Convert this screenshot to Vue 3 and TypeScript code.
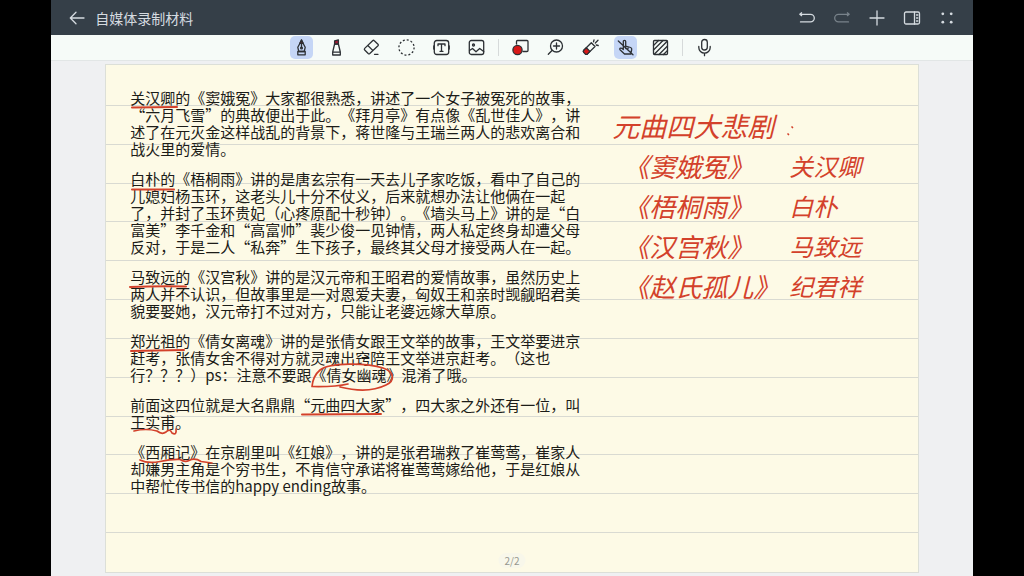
<script setup lang="ts">
interface Play {
  title: string
  author: string
}

const paragraphs: string[][] = [
  [
    '关汉卿的《窦娥冤》大家都很熟悉，讲述了一个女子被冤死的故事，',
    '“六月飞雪”的典故便出于此。《拜月亭》有点像《乱世佳人》，讲',
    '述了在元灭金这样战乱的背景下，蒋世隆与王瑞兰两人的悲欢离合和',
    '战火里的爱情。',
  ],
  [
    '白朴的《梧桐雨》讲的是唐玄宗有一天去儿子家吃饭，看中了自己的',
    '儿媳妇杨玉环，这老头儿十分不仗义，后来就想办法让他俩在一起',
    '了，并封了玉环贵妃（心疼原配十秒钟）。《墙头马上》讲的是“白',
    '富美”李千金和“高富帅”裴少俊一见钟情，两人私定终身却遭父母',
    '反对，于是二人“私奔”生下孩子，最终其父母才接受两人在一起。',
  ],
  [
    '马致远的《汉宫秋》讲的是汉元帝和王昭君的爱情故事，虽然历史上',
    '两人并不认识，但故事里是一对恩爱夫妻，匈奴王和亲时觊觎昭君美',
    '貌要娶她，汉元帝打不过对方，只能让老婆远嫁大草原。',
  ],
  [
    '郑光祖的《倩女离魂》讲的是张倩女跟王文举的故事，王文举要进京',
    '赶考，张倩女舍不得对方就灵魂出窍陪王文举进京赶考。（这也',
    '行？？？）ps：注意不要跟《倩女幽魂》混淆了哦。',
  ],
  [
    '前面这四位就是大名鼎鼎“元曲四大家”，四大家之外还有一位，叫',
    '王实甫。',
  ],
  [
    '《西厢记》在京剧里叫《红娘》，讲的是张君瑞救了崔莺莺，崔家人',
    '却嫌男主角是个穷书生，不肯信守承诺将崔莺莺嫁给他，于是红娘从',
    '中帮忙传书信的happy ending故事。',
  ],
]

const plays: Play[] = [
  { title: '《窦娥冤》', author: '关汉卿' },
  { title: '《梧桐雨》', author: '白朴' },
  { title: '《汉宫秋》', author: '马致远' },
  { title: '《赵氏孤儿》', author: '纪君祥' },
]
</script>

<template>
  <div class="screen" lang="zh-CN">
    <div class="app">
      <header class="topbar">
        <button class="icon-btn" type="button" aria-label="返回">
          <svg width="18" height="18" viewBox="0 0 18 18"><path d="M16 9H2.500M8 3.300 2.300 9 8 14.700" /></svg>
        </button>
        <h1>自媒体录制材料</h1>
        <div class="top-actions">
          <button class="icon-btn" type="button" aria-label="撤销">
            <svg width="18" height="18" viewBox="0 0 18 18"><path d="M1.800 5.300H12.500a3.700 3.700 0 0 1 0 7.600H2.500M3.600 3.800 1.800 5.300 3.600 6.600" /></svg>
          </button>
          <button class="icon-btn dim" type="button" aria-label="重做">
            <svg width="18" height="18" viewBox="0 0 18 18"><path d="M16.200 5.300H5.500a3.700 3.700 0 0 0 0 7.600H15.500M14.400 3.800 16.200 5.300 14.400 6.600" /></svg>
          </button>
          <button class="icon-btn" type="button" aria-label="添加">
            <svg width="18" height="18" viewBox="0 0 18 18"><path d="M9 2v14M2 9h14" /></svg>
          </button>
          <button class="icon-btn" type="button" aria-label="侧栏">
            <svg width="18" height="18" viewBox="0 0 18 18"><rect x="1.500" y="3" width="15" height="12" rx="1.500" /><path d="M11.500 3v12M13.500 6h1.300M13.500 9h1.300M13.500 12h1.300" /></svg>
          </button>
          <button class="icon-btn" type="button" aria-label="更多">
            <svg class="solid" width="18" height="18" viewBox="0 0 18 18"><circle cx="4.800" cy="4.800" r="1.400" /><circle cx="13.200" cy="4.800" r="1.400" /><circle cx="4.800" cy="13.200" r="1.400" /><circle cx="13.200" cy="13.200" r="1.400" /></svg>
          </button>
        </div>
      </header>

      <div class="toolbar" role="toolbar" aria-label="工具">
        <div class="group">
          <button class="tool active" type="button" aria-label="钢笔">
            <svg width="19" height="19" viewBox="0 0 19 19"><path d="M9.500 2.500 5.800 9.300 6.800 13.500H12.200L13.200 9.300Z" /><path class="wine" d="M9.500 1.800 7.800 5.300H11.200Z" /><path d="M9.500 5v4.500M5.800 13.500h7.400v3.300H5.800Z" /><circle cx="9.500" cy="10" r="0.900" /></svg>
          </button>
          <button class="tool" type="button" aria-label="记号笔">
            <svg width="19" height="19" viewBox="0 0 19 19"><path d="M7.600 6 5.700 14V17h7.600V14L11.400 6ZM5.700 14.200h7.600" /><path class="wine" d="M7.600 6V2.800L11.400 1.800V6Z" /></svg>
          </button>
          <button class="tool" type="button" aria-label="橡皮">
            <svg width="19" height="19" viewBox="0 0 19 19"><path d="M10.600 2.700 2.700 10.400q-.8.800 0 1.600l3.500 3.500q.8.700 1.600 0L16 7.800q.8-.8 0-1.600l-3.700-3.500q-.8-.8-1.700 0ZM5.800 7.500l5.200 5.100M12.500 16.300H16" /></svg>
          </button>
          <button class="tool" type="button" aria-label="套索">
            <svg width="19" height="19" viewBox="0 0 19 19"><circle cx="9.500" cy="9.500" r="7.600" stroke-linecap="butt" stroke-dasharray="2 1.980" class="dashed" /></svg>
          </button>
          <button class="tool" type="button" aria-label="文本">
            <svg width="19" height="19" viewBox="0 0 19 19"><rect x="2.300" y="2.500" width="14.400" height="14" rx="2.500" /><path d="M6 7.700V6h7v1.700M9.500 6v7.300M8 13.300h3M1.800 8v3M17.200 8v3" /></svg>
          </button>
          <button class="tool" type="button" aria-label="图片">
            <svg width="19" height="19" viewBox="0 0 19 19"><rect x="2.300" y="2.500" width="14.400" height="14" rx="2" /><path d="m2.500 12.500 3-2 3.500 3.200 3.700-3.200 4 3" /><circle cx="6.500" cy="7" r="1" /></svg>
          </button>
        </div>
        <span class="sep"></span>
        <div class="group">
          <button class="tool" type="button" aria-label="颜色">
            <svg width="19" height="19" viewBox="0 0 19 19"><path d="M5.500 6V3.500q0-1 1-1h9.500q1 0 1 1v9q0 1-1 1H12" /><circle class="red" cx="6.500" cy="12" r="4.600" /></svg>
          </button>
          <button class="tool" type="button" aria-label="放大">
            <svg width="19" height="19" viewBox="0 0 19 19"><circle cx="10.500" cy="8" r="6" /><path d="M6 12.500 2.300 16.300M10.500 5v6M7.500 8h6" /></svg>
          </button>
          <button class="tool" type="button" aria-label="激光笔">
            <svg width="19" height="19" viewBox="0 0 19 19"><path d="M10.300 4.800 2.800 12.200q-1 1.100 0 2.200l1.500 1.500q1.100 1 2.200 0L14 8.500Z" /><path class="red" d="M5.300 9.800 2.800 12.200q-1 1.100 0 2.200l1.500 1.500q1.100 1 2.200 0l2.500-2.500Z" /><path d="M12.500 3.800 13 2M14.300 5 17 2.300M15.200 7l2 .500" /></svg>
          </button>
          <button class="tool active" type="button" aria-label="禁用手指书写">
            <svg width="19" height="19" viewBox="0 0 19 19"><path d="M7.300 11.500V3.500q0-1.200 1.200-1.200t1.200 1.200V8l4.800 1.500q1.500.5 1.200 2L14.800 16H8.500L4 11.700q-.700-1.200.6-1.500 1-.2 2.700 1.300M9.700 8v2.500M12 8.800v2M2.300 3 17 16.700" /></svg>
          </button>
          <button class="tool" type="button" aria-label="底纹">
            <svg width="19" height="19" viewBox="0 0 19 19"><rect x="2.500" y="2.500" width="14" height="14" rx="1" /><path d="M2.500 7.500 7.500 2.500M2.500 12 12 2.500M3.500 16 16.200 3.200M8 16.500 16.500 8M12.500 16.500 16.500 12.500" /></svg>
          </button>
        </div>
        <span class="sep"></span>
        <div class="group">
          <button class="tool" type="button" aria-label="录音">
            <svg width="19" height="19" viewBox="0 0 19 19"><rect x="6.700" y="1.500" width="5.600" height="10.500" rx="2.800" /><path d="M3.800 8.500v1a5.700 5.700 0 0 0 11.400 0v-1M9.500 15.200v2.500" /></svg>
          </button>
        </div>
      </div>

      <main class="desk">
        <article class="page">
          <div class="rules" aria-hidden="true"><span v-for="n in 11" :key="n"></span></div>

          <section class="notes">
            <p v-for="(lines, i) in paragraphs" :key="i">
              <template v-for="(line, j) in lines" :key="j"><br v-if="j > 0" />{{ line }}</template>
            </p>
          </section>

          <section class="hand">
            <h2>元曲四大悲剧</h2>
            <dl>
              <template v-for="play in plays" :key="play.title">
                <dt>{{ play.title }}</dt>
                <dd>{{ play.author }}</dd>
              </template>
            </dl>
          </section>

          <svg class="ink" width="760" height="440" viewBox="0 0 760 440" aria-hidden="true">
            <path d="M26 42.500 71 42M26 124.500 68 124.500M24 222Q50 221 80 221.500M25 286 78 285M196 349.500 275 349" />
            <path class="fine" d="M28 366q12-3 23 0q5 4 9 1q4-4 6 1q5 3 4-4" />
            <path class="fine" d="M34 395q8 4 20 1.500t20-2q5 3 9 1q6-3 12 1l11 1.500" />
            <path class="fine" d="M242 319Q229 322 206 321.500Q207 311 214 305C224 297 262 298 277 303C289 307 289 316 280 320Q262 329 234 322" />
            <path class="fine" d="M682 69l.5.500M686 62l.5.500" />
          </svg>

          <span class="page-no">2/2</span>
        </article>
      </main>
    </div>
  </div>
</template>

<style>
body {
  margin: 0;
  background: #000;
}
</style>

<style scoped>
.screen {
  box-sizing: border-box;
  min-height: 100vh;
  padding: 0 5%;
  display: flex;
  background: #000;
  font-family: "Noto Sans CJK SC", "Noto Sans", sans-serif;
  text-spacing-trim: space-all;
}
.app {
  flex: 1;
  min-width: 0;
  display: flex;
  flex-direction: column;
  background: #eff0f2;
}
button {
  padding: 0;
  border: 0;
  background: none;
  display: flex;
  align-items: center;
  justify-content: center;
}
svg {
  fill: none;
  stroke: currentColor;
  stroke-width: 1.300;
  stroke-linecap: round;
  stroke-linejoin: round;
}
.topbar {
  height: 35px;
  padding: 0 14px;
  display: flex;
  align-items: center;
  background: #353f48;
  color: #d5dbe0;
}
h1 {
  margin: 0 0 0 6px;
  font-size: 14px;
  line-height: 20px;
  font-weight: 400;
}
.icon-btn {
  width: 24px;
  height: 24px;
  color: #d5dbe0;
}
.dim {
  color: #78828a;
}
.solid {
  fill: currentColor;
  stroke: none;
}
.top-actions {
  margin-left: auto;
  display: flex;
  gap: 11px;
}
.toolbar {
  height: 25px;
  padding-right: 18px;
  display: flex;
  align-items: center;
  justify-content: center;
  gap: 10px;
  background: #f6fbf8;
  border-bottom: 1px solid #e2e6e6;
}
.group {
  display: flex;
  gap: 12px;
}
.tool {
  width: 23px;
  height: 23px;
  border-radius: 5px;
  color: #2c3034;
}
.active {
  background: #c5d6f6;
}
.dashed {
  stroke-linecap: butt;
}
.sep {
  width: 1px;
  height: 17px;
  background: #d6dada;
}
.wine {
  fill: #a01c34;
}
.red {
  fill: #d81818;
}
.desk {
  flex: 1;
  display: flex;
  padding: 3px 54px;
}
.page {
  box-sizing: border-box;
  position: relative;
  flex: 1;
  display: flex;
  gap: 32px;
  padding: 24px;
  border: 1px solid #dcdfd8;
  background: #fdfae6;
}
.rules {
  position: absolute;
  inset: 40px 0 39px;
  display: grid;
  grid-auto-rows: 1fr;
  border-top: 1px solid #d9dad2;
}
.rules span {
  border-bottom: 1px solid #d9dad2;
}
.notes {
  position: relative;
  flex: none;
  font-size: 15px;
  line-height: 17px;
  color: #1c1c18;
  white-space: nowrap;
}
.notes p {
  margin: 0 0 13px;
}
.hand {
  position: relative;
  flex: 1;
  padding-top: 17px;
  color: #d3412b;
  font-style: italic;
  line-height: 40px;
  white-space: nowrap;
}
h2 {
  margin: 0;
  font-size: 27px;
  font-weight: 400;
}
dl {
  margin: 0 0 0 11px;
  display: grid;
  grid-template-columns: 166px auto;
  justify-content: start;
}
dt {
  font-size: 26px;
}
dd {
  margin: 0;
  font-size: 24px;
}
.ink {
  position: absolute;
  top: 0;
  left: 0;
  color: #d3412b;
  stroke-width: 2;
  pointer-events: none;
}
.fine {
  stroke-width: 1.700;
}
.page-no {
  position: absolute;
  bottom: 4px;
  left: 50%;
  transform: translateX(-50%);
  padding: 0 6px;
  border-radius: 8px;
  background: #f8f7ea;
  color: #97978f;
  font-size: 10px;
  line-height: 15px;
}
</style>
